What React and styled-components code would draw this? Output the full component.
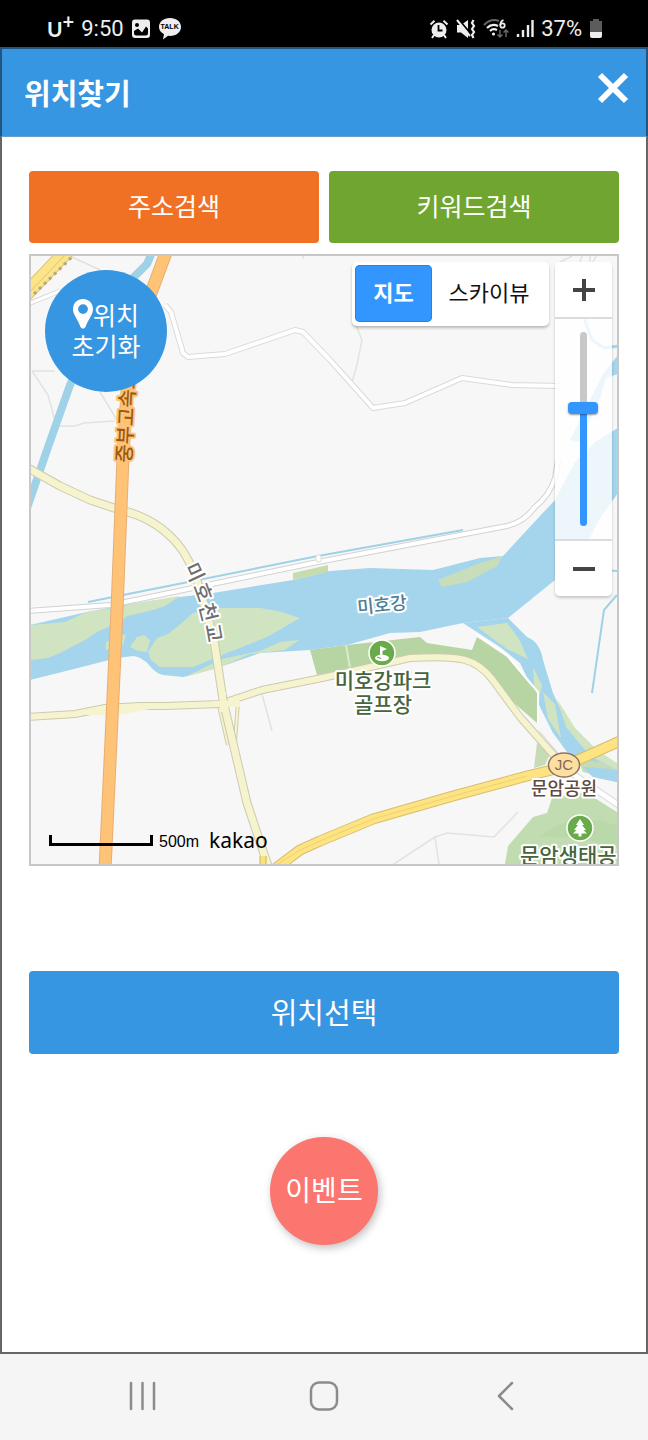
import React, { useState } from 'react';
import styled, { createGlobalStyle, ThemeProvider } from 'styled-components';

const theme = {
  blue: '#3796e1',
  orange: '#f07123',
  green: '#70a52f',
  coral: '#fb766f',
  mapBlue: '#3396ff',
  white: '#fff',
  frame: '#666',
  line: '#c8c8c8',
};

const GlobalStyle = createGlobalStyle`
  * {
    box-sizing: border-box;
  }

  body {
    margin: 0;
    background-color: #fff;
    font-family: 'Noto Sans CJK KR', 'Noto Sans', sans-serif;
  }

  button {
    margin: 0;
    padding: 0;
    border: none;
    font-family: inherit;
    cursor: pointer;
  }
`;

const MAX_LEVEL = 14;

const App = () => {
  const [mapType, setMapType] = useState('map');
  const [zoom, setZoom] = useState(9);

  const zoomIn = () => {
    setZoom(Math.min(MAX_LEVEL, zoom + 1));
  };

  const zoomOut = () => {
    setZoom(Math.max(1, zoom - 1));
  };

  return (
    <ThemeProvider theme={theme}>
      <GlobalStyle />
      <Screen>
        <StatusBar />

        <Frame>
          <Header>
            <Title>위치찾기</Title>
            <CloseButton aria-label="닫기">
              <svg width="32" height="32" viewBox="0 0 32 32">
                <path d="M3 3L29 29M29 3L3 29" stroke="#fff" strokeWidth="6" />
              </svg>
            </CloseButton>
          </Header>

          <Content>
            <SearchButtons>
              <SearchButton $color={theme.orange}>주소검색</SearchButton>
              <SearchButton $color={theme.green}>키워드검색</SearchButton>
            </SearchButtons>

            <MapBox>
              <MapDrawing />

              <ResetButton>
                <span>
                  <PinIcon />
                  위치
                </span>
                <span>초기화</span>
              </ResetButton>

              <MapControls>
                <TypeToggle>
                  <TypeButton
                    $active={mapType === 'map'}
                    onClick={() => setMapType('map')}
                  >
                    지도
                  </TypeButton>
                  <TypeButton
                    $wide
                    $active={mapType === 'sky'}
                    onClick={() => setMapType('sky')}
                  >
                    스카이뷰
                  </TypeButton>
                </TypeToggle>

                <ZoomControl>
                  <ZoomButton aria-label="확대" onClick={zoomIn}>
                    <svg width="24" height="24" viewBox="0 0 24 24">
                      <path d="M1 12H23M12 1V23" stroke="#444" strokeWidth="4" />
                    </svg>
                  </ZoomButton>
                  <SliderBox>
                    <Slider
                      type="range"
                      aria-label="지도 확대 수준"
                      min="1"
                      max={MAX_LEVEL}
                      value={zoom}
                      onChange={e => setZoom(Number(e.target.value))}
                      style={{
                        '--empty': `${((MAX_LEVEL - zoom) / 13) * 100}%`,
                      }}
                    />
                  </SliderBox>
                  <ZoomButton aria-label="축소" onClick={zoomOut}>
                    <svg width="24" height="24" viewBox="0 0 24 24">
                      <path d="M1 12H23" stroke="#444" strokeWidth="4" />
                    </svg>
                  </ZoomButton>
                </ZoomControl>
              </MapControls>

              <MapFooter>
                <ScaleBar />
                <ScaleText>500m</ScaleText>
                <Logo>kakao</Logo>
              </MapFooter>
            </MapBox>

            <SelectButton>위치선택</SelectButton>
            <EventButton>이벤트</EventButton>
          </Content>
        </Frame>

        <NavBar>
          <NavButton aria-label="최근 앱">
            <svg width="30" height="30" viewBox="0 0 30 30">
              <path
                d="M3 2V28M14.5 2V28M26 2V28"
                stroke="#8c8c8c"
                strokeWidth="2.5"
                strokeLinecap="round"
              />
            </svg>
          </NavButton>
          <NavButton aria-label="홈">
            <svg width="30" height="30" viewBox="0 0 30 30">
              <rect
                x="2"
                y="1.5"
                width="26"
                height="27"
                rx="8"
                fill="none"
                stroke="#8c8c8c"
                strokeWidth="2.5"
              />
            </svg>
          </NavButton>
          <NavButton aria-label="뒤로">
            <svg width="30" height="30" viewBox="0 0 30 30">
              <path
                d="M22 2L9 15L22 28"
                fill="none"
                stroke="#8c8c8c"
                strokeWidth="2.5"
                strokeLinecap="round"
                strokeLinejoin="round"
              />
            </svg>
          </NavButton>
        </NavBar>
      </Screen>
    </ThemeProvider>
  );
};

export default App;

const StatusBar = () => (
  <Status>
    <StatusGroup>
      <Carrier>
        U<sup>+</sup>
      </Carrier>
      <StatusText>9:50</StatusText>
      <svg width="20" height="20" viewBox="0 0 20 20">
        <rect x="1" y="0.5" width="18" height="18.5" rx="3" fill="#eee" />
        <circle cx="6" cy="6" r="2" fill="#000" />
        <path d="M3 14V12L7 9.500L11 13.500L15 7.500L17 9.500V14Q17 16.500 14.500 16.500H5.500Q3 16.500 3 14Z" fill="#000" />
      </svg>
      <TalkIcon>
        <svg width="24" height="22" viewBox="0 0 24 22">
          <path
            d="M12 0C5.5 0 1 3.800 1 9C1 12 3 14.600 6 16.300L5 21.500L10 17.800C18 18.500 23 14.500 23 9C23 3.800 18.500 0 12 0Z"
            fill="#eee"
          />
        </svg>
        <span>TALK</span>
      </TalkIcon>
    </StatusGroup>

    <StatusGroup>
      {/* 알람 */}
      <svg width="20" height="20" viewBox="0 0 20 20">
        <circle cx="10" cy="11" r="7.5" fill="#eee" />
        <path d="M1.500 5.500L5.500 1.800M18.500 5.500L14.500 1.800M5 16L3 19M15 16L17 19" stroke="#eee" strokeWidth="2" />
        <path d="M9.500 6V11.500H13.500" stroke="#000" strokeWidth="1.8" fill="none" />
      </svg>
      {/* 진동 */}
      <svg width="20" height="20" viewBox="0 0 20 20">
        <path d="M1 6H5L12 1V19L5 13.500H1Z" fill="#eee" />
        <path d="M2 0L15 15" stroke="#000" strokeWidth="2" />
        <path d="M1 1L14 17" stroke="#eee" strokeWidth="2" />
        <path d="M17.500 1L16 4L18 7L16 10L18 13L16 16L17.500 19" stroke="#eee" strokeWidth="2.2" fill="none" />
      </svg>
      {/* 와이파이 */}
      <svg width="26" height="20" viewBox="0 0 26 20">
        <path d="M1 6Q8 -1 16 2" stroke="#666" strokeWidth="2" fill="none" />
        <path d="M4 9Q9 4 15 7M7 12Q10 9 14 11" stroke="#eee" strokeWidth="2.2" fill="none" />
        <circle cx="10.5" cy="15" r="1.6" fill="#eee" />
        <circle cx="19.5" cy="6.5" r="2.2" stroke="#eee" strokeWidth="1.8" fill="none" />
        <path d="M17.300 6Q17.500 2 20.500 1" stroke="#eee" strokeWidth="1.8" fill="none" />
        <path d="M17 11V18M14.500 15.500L17 18L19.500 15.500M23 18V11M20.500 13.500L23 11L25.500 13.500" stroke="#666" strokeWidth="1.5" fill="none" />
      </svg>
      <svg width="18" height="20" viewBox="0 0 18 20">
        <path d="M2 15V18M7 11V18M12 6V18M16.500 1V18" stroke="#eee" strokeWidth="2.4" />
      </svg>
      <StatusText>37%</StatusText>
      <svg width="14" height="20" viewBox="0 0 14 20">
        <path d="M4 0H10V2H13V13H1V2H4Z" fill="#5c5c5c" />
        <path d="M1 13H13V17Q13 19 11 19H3Q1 19 1 17Z" fill="#eee" />
      </svg>
    </StatusGroup>
  </Status>
);

const PinIcon = () => (
  <svg width="20" height="30" viewBox="0 0 20 30">
    <path
      d="M10 0C4.300 0 0 4.300 0 10C0 16 4.500 19.500 7.500 28Q10 31.500 12.500 28C15.500 19.500 20 16 20 10C20 4.300 15.700 0 10 0ZM10 5.200A4.900 4.900 0 1 1 10 15A4.900 4.900 0 1 1 10 5.200Z"
      fill="#fff"
      fillRule="evenodd"
    />
  </svg>
);

const Road = ({ d, width, color, edge }) => (
  <g fill="none" strokeLinejoin="round">
    <path d={d} stroke={edge} strokeWidth={width + 2} />
    <path d={d} stroke={color} strokeWidth={width} />
  </g>
);

const MapDrawing = () => (
  <MapSvg viewBox="31 256 586 608" preserveAspectRatio="xMidYMid slice">
    <rect x="31" y="256" width="586" height="608" fill="#f7f7f7" />

    {/* 작은 길 */}
    <g fill="none" stroke="#e2e2e2" strokeWidth="1.5">
      <path d="M70 256L100 270M32 371H55M32 371L48 395L56 424M56 426H75L84 423L115 421M100 392L117 420" />
      <path d="M354 320L362 340L357 365L352 382M303 256V259" />
      <path d="M262 694L272 731M394 864L435 837L447 833L494 837L518 812M435 837L439 864" />
      <path d="M560 262L572 256M582 256L580 262M590 256V262M596 256L592 264" />
    </g>

    {/* 미호강 */}
    <path
      d="M30 625L87 612L130 604L180 597L213 593L293 580L330 571L370 568L433 570L480 558L503 556L527 530L555 500L575 462L595 442L618 428V493L600 518L580 556L555 580L508 618L463 623L420 632L390 633L347 645L310 650L260 653L220 667L183 677L163 675C150 672 149 658 133 656L117 658L70 670L30 680Z"
      fill="#a4d5ec"
    />
    <path
      d="M463 623L508 618L527 637Q540 642 543 660L553 693L567 723L587 750L617 768V782L593 777L567 752L553 733L540 707L533 690L520 663L500 647Z"
      fill="#a4d5ec"
    />
    <path d="M618 355L603 374L590 400L570 440L580 442L600 398L606 378L618 374Z" fill="#a4d5ec" />
    <path d="M584 318L592 340L604 348L618 346" fill="none" stroke="#a4d5ec" strokeWidth="3" />

    {/* 녹지 */}
    <g fill="#d1e4c1">
      <path d="M30 625L65 622L87 612L113 608L110 626L97 632L85 640L60 653L48 658L30 660Z" />
      <path d="M110 611L130 604L180 596L165 606L153 610L127 616L112 629Z" />
      <path d="M106 642L126 634L123 645L106 650Z" />
      <path d="M130 647L137 637L144 635L150 640L147 652L138 651Z" />
      <path d="M148 652L157 638L168 634L177 627L193 613L220 608L260 608L278 611L300 618L267 637L227 653L193 667L160 667L151 660Z" />
      <path d="M185 677L222 659L260 651L280 642L299 640L285 650L250 654L218 668Z" />
      <path d="M477 627L507 623L519 639L528 659L507 649Z" />
      <path d="M533 667L542 685L539 700L534 685ZM543 692L555 704L561 738L548 719Z" />
      <path d="M557 699L575 728L597 750L617 763V770L590 756L566 727Z" />
    </g>
    <path d="M293 573L328 565V572L293 580Z" fill="#c5dcae" />
    <path d="M438 580L455 573L480 563L503 556L497 566L467 582L442 587Z" fill="#c8debb" />
    <path
      d="M310 650L347 645L420 637L427 643L472 650L477 637L507 657L537 693V723L507 697L483 670L460 660L410 660L317 675Z"
      fill="#b7d5a2"
    />
    <path d="M346 645L350 668" stroke="#dceacf" strokeWidth="2" />
    <path d="M477 635L507 655L538 692V722" fill="none" stroke="#fff" strokeWidth="2" />
    <path d="M537 743L552 750L545 765L534 768Z" fill="#c5dcb6" />
    <path d="M583 772L595 775L617 778V770L600 762L578 760Z" fill="#c5dcb6" />
    <path d="M583 767L600 768L617 770V782L593 777Z" fill="#a4d5ec" />
    <path d="M505 864L508 846L533 817L547 813L552 798L585 792L617 812V864Z" fill="#c1dcb0" />
    <path d="M540 836L560 824L600 820L617 826V848L580 838Z" fill="#b4d5a4" opacity="0.5" />

    {/* 물길 */}
    <g fill="none" stroke="#9fd2e6">
      <path d="M153 250L147 264L134 277L100 320L70 385L47 450L27 508" strokeWidth="8" />
      <path d="M88 602L318 556L463 530" strokeWidth="2" />
      <path d="M617 595L604 610L592 693M604 570L617 571" strokeWidth="2" />
    </g>

    {/* 흰색 도로 */}
    <Road d="M165 305L171 312L183 353L188 357L225 354L295 330L303 332L330 360L373 408L405 403L462 378L512 385L560 386" width={4} color="#fff" edge="#dadada" />
    <Road d="M28 304L60 291" width={3} color="#fff" edge="#dadada" />
    <Road d="M28 611L110 605L140 599L318 562L507 526Q524 522 534 508Q550 495 555 478L558 460" width={4} color="#fff" edge="#d2d2d2" />
    <Road d="M537 733L570 772L620 806" width={5} color="#fff" edge="#dcdcdc" />
    <rect x="316" y="555" width="5" height="7" rx="2" fill="#fff" stroke="#ddd" />

    {/* 국도 */}
    <Road d="M219 706L228 745M238 702L235 742" width={2} color="#f6f4cf" edge="#cfccb0" />
    <Road d="M28 717L75 714L105 708L140 706L165 706L220 704L262 690L322 678L410 658Q450 656 465 660Q480 664 492 679L520 717L558 760" width={6} color="#f6f4cf" edge="#cdcaaf" />
    <path d="M75 715L103 706Q140 702 155 706L150 709L118 715H90Z" fill="#f6f4cf" />
    <Road d="M28 468L60 486L90 500L120 510Q153 517 175 541Q190 557 200 590L214 640L223 700L233 743L247 803L268 866" width={7} color="#f6f4cf" edge="#cdcaaf" />
    <path d="M223 692V712M212 704H240" stroke="#f6f4cf" strokeWidth="6" />

    {/* 고속도로 */}
    <Road d="M22 298L70 248" width={13} color="#fbe588" edge="#d9c47c" />
    <path d="M26 296L67 253" stroke="#d9c47c" />
    <path d="M34 294L74 255" stroke="#bba87a" strokeWidth="3" strokeDasharray="3 4" />
    <Road d="M263 870V856" width={5} color="#fbe27a" edge="#c9b25f" />
    <Road d="M268 874L300 850L320 841L373 819L453 796L527 776L560 768L620 741" width={9} color="#fde382" edge="#d8be6c" />
    <path d="M273 867L300 850L320 841L373 819L453 796L527 776" fill="none" stroke="#eed272" />
    <Road d="M167 250L151 293Q131 340 128 375L123 457L117 610L105 870" width={11} color="#ffc378" edge="#e8ad73" />

    {/* 지명 */}
    <MapLabel $size={20} $color="#9c5a10" $halo="#ffc378" transform="translate(131 463) rotate(-87)">
      중부고속도로
    </MapLabel>
    <MapLabel
      $size={20}
      $color="#6e6e6e"
      $halo="#fff"
      x="184 193 199 205"
      y="567 586 605 625"
      rotate="65 70 76 80"
    >
      미호천교
    </MapLabel>
    <MapLabel $size={18} $color="#4f7d96" $halo="#fff" transform="translate(358 614) rotate(-6)">
      미호강
    </MapLabel>
    <MapLabel $size={21} $color="#47653c" $halo="#fff" textAnchor="middle" x="383" y="688">
      미호강파크
    </MapLabel>
    <MapLabel $size={21} $color="#47653c" $halo="#fff" textAnchor="middle" x="383" y="712">
      골프장
    </MapLabel>
    <MapLabel $size={18} $color="#5f4a42" $halo="#fff" textAnchor="middle" x="564" y="795">
      문암공원
    </MapLabel>
    <MapLabel $size={21} $color="#47653c" $halo="#fff" x="520" y="863">
      문암생태공원
    </MapLabel>

    <ellipse cx="564" cy="765" rx="15.5" ry="12" fill="#fddf9f" stroke="#8c7264" strokeWidth="1.5" />
    <JunctionText x="564" y="770" textAnchor="middle">
      JC
    </JunctionText>

    <circle cx="382" cy="653" r="13" fill="#69ab4b" stroke="#fff" strokeWidth="1.5" />
    <path d="M380 646L387 649L382.500 651V656H380Z" fill="#fff" />
    <ellipse cx="382" cy="658" rx="7" ry="3.2" fill="#fff" />
    <path d="M377 657L381 658.500" stroke="#69ab4b" strokeWidth="1.2" />

    <circle cx="580" cy="828" r="13" fill="#69ab4b" stroke="#fff" strokeWidth="1.5" />
    <path d="M580 819L584 825H582L586 830H583.500L587 833.500H581.500V836.500H578.500V833.500H573L576.500 830H574L578 825H576Z" fill="#fff" />
  </MapSvg>
);

const Screen = styled.div`
  display: flex;
  flex-direction: column;
  min-height: 100vh;
`;

const Status = styled.div`
  display: flex;
  align-items: center;
  justify-content: space-between;
  height: 47px;
  padding: 10px 45px 0 47px;
  background-color: #000;
  color: #eee;
`;

const StatusGroup = styled.div`
  display: flex;
  align-items: center;
  gap: 7px;
`;

const StatusText = styled.span`
  font-family: Roboto, sans-serif;
  font-size: 22px;
  line-height: 28px;
`;

const Carrier = styled.span`
  font-family: Lato, sans-serif;
  font-size: 21px;
  font-weight: 700;
  line-height: 28px;

  sup {
    font-size: 20px;
    line-height: 10px;
  }
`;

const TalkIcon = styled.span`
  display: grid;
  place-items: center;

  svg,
  span {
    grid-area: 1 / 1;
  }

  span {
    padding-bottom: 4px;
    color: #000;
    font-family: 'Liberation Sans', sans-serif;
    font-size: 7px;
    font-weight: 700;
    line-height: 8px;
  }
`;

const Frame = styled.div`
  display: flex;
  flex: 1;
  flex-direction: column;
  border: 2px solid ${theme.frame};
  border-top: none;
`;

const Header = styled.header`
  display: flex;
  align-items: center;
  justify-content: space-between;
  height: 90px;
  margin: 0 -2px;
  padding: 0 17px 2px 22px;
  border: 2px solid #23557f;
  border-bottom: 1px solid #6a9cc4;
  background-color: ${theme.blue};
`;

const Title = styled.h1`
  margin: 0;
  color: ${theme.white};
  font-size: 29px;
  font-weight: 700;
  line-height: 40px;
`;

const CloseButton = styled.button`
  padding-bottom: 8px;
  background: none;

  svg {
    display: block;
  }
`;

const Content = styled.main`
  display: flex;
  flex: 1;
  flex-direction: column;
  padding: 34px 27px;
`;

const SearchButtons = styled.div`
  display: grid;
  grid-template-columns: 1fr 1fr;
  gap: 10px;
`;

const Button = styled.button`
  padding-bottom: 4px;
  border-radius: 4px;
  color: ${theme.white};
`;

const SearchButton = styled(Button)`
  height: 72px;
  background-color: ${props => props.$color};
  font-size: 25px;
`;

const MapBox = styled.section`
  position: relative;
  height: 612px;
  margin-top: 11px;
  border: 2px solid ${theme.line};
  overflow: hidden;
`;

const MapSvg = styled.svg`
  display: block;
  width: 100%;
  height: 100%;
`;

const MapLabel = styled.text`
  fill: ${props => props.$color};
  font-size: ${props => props.$size}px;
  font-weight: 500;
  stroke: ${props => props.$halo};
  stroke-width: 4px;
  stroke-linejoin: round;
  paint-order: stroke;
`;

const JunctionText = styled.text`
  fill: #85685a;
  font-family: 'Liberation Sans', sans-serif;
  font-size: 15px;
`;

const ResetButton = styled.button`
  position: absolute;
  top: 14px;
  left: 14px;
  display: flex;
  flex-direction: column;
  align-items: center;
  justify-content: center;
  width: 122px;
  height: 122px;
  padding-bottom: 3px;
  border-radius: 50%;
  background-color: ${theme.blue};
  color: ${theme.white};
  font-size: 25px;
  line-height: 31px;

  span {
    display: flex;
  }
`;

const MapControls = styled.div`
  position: absolute;
  top: 6px;
  right: 5px;
  display: flex;
  align-items: flex-start;
  gap: 6px;
`;

const TypeToggle = styled.div`
  display: flex;
  padding: 3px 3px 4px;
  border-radius: 5px;
  background-color: ${theme.white};
  box-shadow: 0 2px 3px rgba(0, 0, 0, 0.25);
`;

const TypeButton = styled.button`
  width: ${props => (props.$wide ? '114px' : '77px')};
  height: 57px;
  padding-bottom: 5px;
  border-radius: 5px;
  background-color: ${props => (props.$active ? theme.mapBlue : theme.white)};
  box-shadow: ${props => (props.$active ? 'inset 0 0 0 1px #2b82dd' : 'none')};
  color: ${props => (props.$active ? theme.white : '#111')};
  font-size: 22px;
  font-weight: ${props => (props.$active ? 700 : 400)};
`;

const ZoomControl = styled.div`
  width: 57px;
  border-radius: 5px;
  box-shadow: 0 2px 3px rgba(0, 0, 0, 0.2);
  overflow: hidden;
`;

const ZoomButton = styled.button`
  display: grid;
  place-items: center;
  width: 100%;
  height: 55px;
  background-color: ${theme.white};
`;

const SliderBox = styled.div`
  display: flex;
  justify-content: center;
  padding: 13px 0;
  border: 2px solid #dcdcdc;
  border-width: 2px 0;
  background-color: rgba(255, 255, 255, 0.8);
`;

const Slider = styled.input`
  appearance: none;
  width: 30px;
  height: 194px;
  margin: 0;
  background: none;
  writing-mode: vertical-lr;
  direction: rtl;

  &::-webkit-slider-runnable-track {
    width: 7px;
    border-radius: 4px;
    background: linear-gradient(
      to bottom,
      #c8c8c8 var(--empty),
      ${theme.mapBlue} var(--empty)
    );
  }

  &::-webkit-slider-thumb {
    appearance: none;
    width: 30px;
    height: 12px;
    margin-left: -12px;
    margin-right: -12px;
    border-radius: 4px;
    background-color: ${theme.mapBlue};
    box-shadow: 0 1px 2px rgba(0, 0, 0, 0.4);
  }
`;

const MapFooter = styled.div`
  position: absolute;
  bottom: 10px;
  left: 18px;
  display: flex;
  align-items: center;
  color: #000;
`;

const ScaleBar = styled.div`
  width: 104px;
  height: 11px;
  border: 3px solid #000;
  border-top: none;
`;

const ScaleText = styled.span`
  margin: 4px 10px 0 6px;
  font-family: 'Liberation Sans', sans-serif;
  font-size: 16px;
  line-height: 20px;
`;

const Logo = styled.span`
  font-family: 'Noto Sans', sans-serif;
  font-size: 21px;
  line-height: 28px;
`;

const SelectButton = styled(Button)`
  height: 83px;
  margin-top: 105px;
  background-color: ${theme.blue};
  font-size: 29px;
`;

const EventButton = styled(Button)`
  align-self: center;
  width: 108px;
  height: 108px;
  margin-top: 83px;
  border-radius: 50%;
  background-color: ${theme.coral};
  box-shadow: 2px 3px 8px rgba(0, 0, 0, 0.25);
  font-size: 28px;
`;

const NavBar = styled.nav`
  display: grid;
  grid-template-columns: repeat(3, 1fr);
  height: 86px;
  padding: 0 52px 2px;
  background-color: #f5f5f5;
`;

const NavButton = styled.button`
  display: grid;
  place-items: center;
  background: none;
`;
